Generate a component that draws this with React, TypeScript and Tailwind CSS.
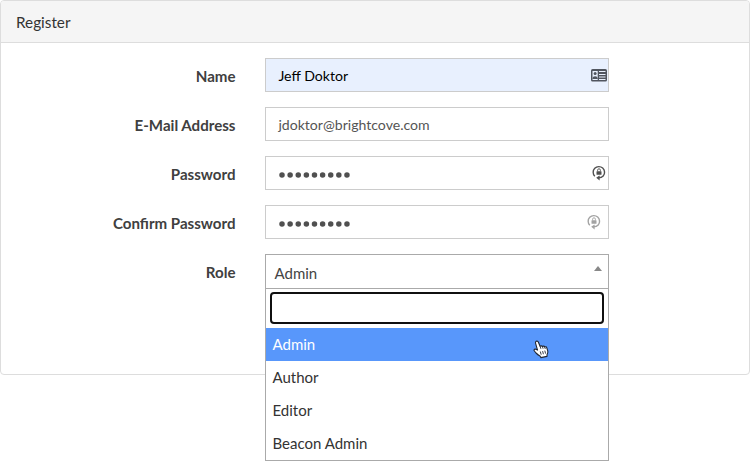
import type { ReactNode } from 'react';

function Row({ label, children }: { label: string; children: ReactNode }) {
  return (
    <div className="flex h-[34px] items-center">
      <label className="w-[235px] shrink-0 pt-px pr-[0.5px] text-right text-[15.1px] font-bold text-[#404040]">{label}</label>
      <div className="ml-[29px] w-[344px] shrink-0">{children}</div>
    </div>
  );
}

function ContactIcon() {
  return (
    <svg width="16" height="13" viewBox="0 0 16 13" className="block">
      <rect x="0" y="0" width="16" height="12.5" rx="1.6" fill="#50555f" />
      <rect x="1.5" y="2" width="5.2" height="9" fill="#e8f0fe" />
      <circle cx="4.1" cy="4.5" r="1.5" fill="#50555f" />
      <path d="M1.5 10V9.2Q1.7 7.2 4.1 7.2t2.6 2V10z" fill="#50555f" />
      <path d="M8 2.5h6.5M8 5.5h6.5M8 8h6.5M8 10.5h6.5" stroke="#e8f0fe" strokeWidth="1" />
    </svg>
  );
}

function KeyIcon({ color }: { color: string }) {
  return (
    <svg width="14" height="16" viewBox="0 0 14 16" className="block">
      <path d="M2.8 11.3A5.7 5.7 0 1 1 11.2 11Q9.7 12.8 6.3 12.8" fill="none" stroke={color} strokeWidth="1.4" />
      <path d="M7.6 10.4v5L4.2 12.8z" fill={color} />
      <rect x="4.5" y="6.2" width="5" height="3.6" rx="0.5" fill={color} />
      <path d="M5.6 6.3V5.2a1.4 1.4 0 0 1 2.8 0v1.1" fill="none" stroke={color} strokeWidth="0.9" />
    </svg>
  );
}

function Dots() {
  return (
    <svg width="73" height="6" viewBox="0 0 73 6" className="mt-[3px] block">
      {Array.from({ length: 9 }, (_, i) => (
        <circle key={i} cx={4 + i * 8.12} cy="3" r="2.75" fill="#505050" />
      ))}
    </svg>
  );
}

function HandCursor() {
  return (
    <svg width="18" height="19" viewBox="0 0 18 19" className="absolute top-[12px] left-[267px]">
      <path
        d="M3.2 1.3c1-.5 1.8.1 2.2 1l1.7 4c.7-.7 1.8-.5 2.3.2.8-.7 1.8-.4 2.3.4 1-.5 1.8 0 2.1 1l1 3.3c.3 1.4-.2 2.4-.8 3.5v1.7l-6.2 1.2-.8-1.6c-1.4-.6-2.8-1.8-4-3L1.4 11c-.9-1-.2-2 .8-1.9l2.3 1L2.6 3.4c-.3-.8-.2-1.6.6-2.1z"
        fill="white"
        stroke="#202632"
        strokeWidth="1.1"
        strokeLinejoin="round"
      />
      <path d="M7.1 6.3l.8 2.5M9.4 6.6l.7 2.1M11.7 7.1l.6 1.8M7.3 11.5l.9 3.2M9.6 11.1l.8 3.1M11.8 10.6l.8 3" stroke="#202632" strokeWidth="0.9" fill="none" />
    </svg>
  );
}

const field = 'flex h-[34px] items-center justify-between border border-[#ccc] pl-[12.4px]';
const option = 'flex h-[33px] items-center px-[6.5px] pb-[2px]';

export default function App() {
  return (
    <div className="h-[462px] w-[752px] overflow-hidden bg-white font-['Lato',sans-serif] text-[15px] leading-5 text-[#333]">
      <div className="h-[375px] w-[750px] rounded border border-[#ddd] bg-white">
        <div className="flex h-[42px] items-center rounded-t-[3px] border-b border-[#ddd] bg-[#f5f5f5] px-[15px] text-[15.3px]">Register</div>
        <div className="flex flex-col gap-[15px] pt-[15px]">
          <Row label="Name">
            <div className={`${field} bg-[#e8f0fe] pr-px text-[14.1px] text-black`}>
              <span className="pt-px">Jeff Doktor</span>
              <ContactIcon />
            </div>
          </Row>
          <Row label="E-Mail Address">
            <div className={`${field} text-[14.1px] text-[#555]`}>
              <span className="pt-px">jdoktor@brightcove.com</span>
            </div>
          </Row>
          <Row label="Password">
            <div className={`${field} pr-[2px]`}>
              <Dots />
              <KeyIcon color="#505050" />
            </div>
          </Row>
          <Row label="Confirm Password">
            <div className={`${field} pr-[7px]`}>
              <Dots />
              <KeyIcon color="#a3a3a3" />
            </div>
          </Row>
          <Row label="Role">
            <div className="relative">
              <div className="flex h-[34px] items-center justify-between border border-b-0 border-[#aaa] pr-[6px] pl-[8.5px] text-[#444]">
                <span className="pt-0.5">Admin</span>
                <span className="mb-[6px] h-0 w-0 border-x-4 border-b-[5px] border-x-transparent border-b-[#888]" />
              </div>
              <div className="absolute top-[34px] left-0 z-10 w-[344px] border border-[#aaa] bg-white">
                <div className="px-1 pt-[3px] pb-1">
                  <div className="h-8 rounded-[4px] border-2 border-[#101010] bg-white" />
                </div>
                <div className={`${option} relative bg-[#5897fb] text-white`}>
                  Admin
                  <HandCursor />
                </div>
                <div className={option}>Author</div>
                <div className={option}>Editor</div>
                <div className={option}>Beacon Admin</div>
              </div>
            </div>
          </Row>
        </div>
      </div>
    </div>
  );
}
